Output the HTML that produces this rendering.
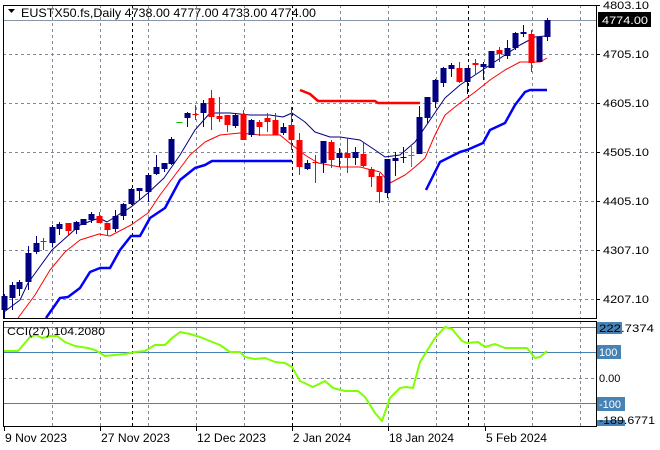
<!DOCTYPE html>
<html><head><meta charset="utf-8">
<style>
html,body{margin:0;padding:0;background:#fff;}
svg{display:block;font-family:"Liberation Sans",sans-serif;}
</style></head>
<body>
<svg id="c" width="660" height="450" xmlns="http://www.w3.org/2000/svg">
<rect width="660" height="450" fill="#fff"/>
<g id="grid"></g>
<g id="lines"></g>
<g id="candles"></g>
<g id="axes"></g>
</svg>
<script>
const NS="http://www.w3.org/2000/svg";
function el(p,tag,a,txt){const e=document.createElementNS(NS,tag);for(const k in a)e.setAttribute(k,a[k]);if(txt!==undefined)e.textContent=txt;document.getElementById(p).appendChild(e);return e;}
for(let x=52;x<596;x+=48){ if(x===292) continue;
 el('grid','line',{x1:x+.5,y1:5,x2:x+.5,y2:318,stroke:'#7f8a96','stroke-dasharray':'3,3'});
 el('grid','line',{x1:x+.5,y1:321,x2:x+.5,y2:426,stroke:'#7f8a96','stroke-dasharray':'3,3'});}
[132,292,468].forEach(x=>{
 el('grid','line',{x1:x+.5,y1:5,x2:x+.5,y2:318,stroke:'#000','stroke-dasharray':'3,3'});
 el('grid','line',{x1:x+.5,y1:321,x2:x+.5,y2:426,stroke:'#000','stroke-dasharray':'3,3'});});
[54,103,152,201,250,299].forEach(y=>el('grid','line',{x1:3,y1:y+.5,x2:596,y2:y+.5,stroke:'#7f8a96','stroke-dasharray':'3,3'}));
el('grid','line',{x1:3,y1:20.5,x2:596,y2:20.5,stroke:'#8896a4'});
[327,352,403].forEach(y=>el('grid','line',{x1:3,y1:y+.5,x2:596,y2:y+.5,stroke:'#4682b4'}));
el('grid','line',{x1:3,y1:378.5,x2:596,y2:378.5,stroke:'#7f8a96','stroke-dasharray':'3,3'});
function pl(pts,col,w){el('lines','polyline',{points:pts.map(p=>p.join(',')).join(' '),fill:'none',stroke:col,'stroke-width':w,'stroke-linejoin':'round'});}
pl([[4,312],[20,300],[28,283],[52,250],[80,225],[99,218],[107,222],[131,207],[148,193],[164,178],[180,155],[195,130],[210,113],[230,113],[250,115],[270,115],[283,117],[292,113],[305,122],[315,132],[330,137],[340,137],[360,140],[375,150],[385,157],[400,155],[415,142],[430,120],[445,98],[460,85],[475,75],[490,65],[505,55],[520,45],[535,37],[545,36]],'#000080',1);
pl([[18,318],[35,295],[50,270],[65,252],[80,240],[99,234],[110,236],[131,225],[148,213],[160,195],[175,175],[190,155],[205,142],[220,135],[240,133],[260,135],[280,135],[292,145],[305,155],[318,163],[340,167],[360,167],[380,172],[390,183],[405,175],[415,167],[425,158],[435,135],[445,115],[460,103],[475,92],[490,80],[505,70],[520,62],[530,62],[540,62],[547,58]],'#ff0000',1);
pl([[46,318],[60,298],[68,297],[80,288],[90,272],[100,268],[110,268],[120,250],[131,236],[140,236],[150,218],[165,208],[180,180],[195,168],[205,165],[212,161],[292,161]],'#0000ff',2.5);
pl([[426,190],[440,162],[460,152],[467,150],[483,143],[490,130],[505,123],[515,105],[525,92],[530,90],[547,90]],'#0000ff',2.5);
pl([[300,90],[310,94],[318,101],[375,101],[378,103],[420,103]],'#ff0000',2.5);
pl([[4,351],[18,351],[30,337],[36,335],[42,338],[50,336],[57,336],[65,342],[75,346],[88,348],[95,350],[105,356],[115,355],[125,354],[135,352],[145,351],[155,345],[165,345],[172,338],[180,332],[190,334],[200,337],[210,341],[220,345],[230,352],[240,352],[245,357],[255,359],[265,358],[275,362],[285,363],[292,367],[300,381],[313,387],[325,381],[333,388],[345,391],[358,391],[365,397],[375,413],[382,421],[390,398],[400,388],[406,387],[413,388],[420,362],[435,338],[445,327],[452,329],[462,341],[467,343],[478,342],[485,347],[495,344],[505,348],[527,348],[535,358],[540,357],[547,351]],'#7fff00',2);
const B='#000080',R='#ff0000',G='#00c000';
const C=[
[4,296,310,294,318,B],[12,285,298,282,310,B],[19,282,289,280,296,B],[28,253,282,246,290,B],[36,243,252,236,254,B],[43,241,241,238,250,R],
[52,227,243,225,247,B],[59,224,229,222,235,B],[68,223,231,223,235,R],[76,222,230,221,234,B],[83,219,225,219,225,B],[91,214,220,212,223,B],
[99,216,223,212,223,R],[107,223,230,223,236,R],[115,216,229,210,232,B],[123,204,216,203,220,B],[131,189,204,188,205,B],[139,188,191,188,200,B],
[148,175,192,173,202,B],[156,167,174,155,175,B],[164,163,169,163,172,B],[171,139,164,137,165,B],[179,122,122,122,122,G],[187,113,118,112,127,B],
[195,114,114,105,120,R],[203,103,113,100,127,B],[211,98,117,90,130,R],[219,116,119,97,122,R],[227,115,125,115,132,R],[235,115,126,114,128,B],
[243,114,140,110,140,R],[251,120,135,119,137,B],[259,122,127,120,136,R],[267,118,122,113,132,R],[275,120,135,113,135,R],[283,127,133,123,135,B],
[291,125,140,107,150,R],[299,140,167,133,175,R],[307,163,169,160,170,B],[315,162,162,155,183,R],[323,141,163,141,173,B],[331,142,160,140,168,R],
[339,153,158,148,167,B],[347,153,158,138,173,R],[355,152,158,147,165,B],[363,154,166,143,167,R],[371,169,177,167,187,R],[379,176,192,173,203,R],
[387,159,193,159,198,B],[395,158,161,152,176,B],[403,157,157,147,163,B],[411,155,155,145,167,G],[419,117,154,106,154,B],[427,97,118,97,123,B],
[435,80,102,79,108,B],[443,68,83,67,87,B],[451,65,69,63,77,B],[459,68,82,62,83,R],[467,68,82,68,94,B],[475,63,65,59,75,R],
[483,64,67,62,80,B],[491,51,68,51,68,B],[499,50,54,47,62,R],[507,48,56,40,59,B],[515,33,48,32,50,B],[523,32,34,25,37,B],
[531,34,63,30,72,R],[539,37,62,37,62,B],[547,20,37,18,41,B]];
C.forEach(c=>{const[x,t,b,wt,wb,col]=c;
 el('candles','line',{x1:x+.5,y1:wt,x2:x+.5,y2:wb,stroke:col});
 if(b-t<1) el('candles','line',{x1:x-2.5,y1:t+.5,x2:x+3.5,y2:t+.5,stroke:col});
 else el('candles','rect',{x:x-2.5,y:t,width:6,height:b-t,fill:col});});
el('axes','rect',{x:3.5,y:5.5,width:593,height:313,fill:'none',stroke:'#000'});
el('axes','rect',{x:3.5,y:321.5,width:593,height:105,fill:'none',stroke:'#000'});
el('axes','path',{d:'M8 9 L15 9 L11.5 13 Z',fill:'#000'});
el('axes','text',{x:21,y:17,'font-size':12,fill:'#000',textLength:295,lengthAdjust:'spacingAndGlyphs'},'EUSTX50.fs,Daily  4738.00 4777.00 4733.00 4774.00');
[[5,'4803.10'],[54,'4705.10'],[103,'4605.10'],[152,'4505.10'],[201,'4405.10'],[250,'4307.10'],[299,'4207.10']].forEach(([y,t])=>{
 el('axes','line',{x1:596,y1:y+.5,x2:600,y2:y+.5,stroke:'#000'});
 el('axes','text',{x:603,y:y+4,'font-size':11,fill:'#000',textLength:46,lengthAdjust:'spacingAndGlyphs'},t);});
el('axes','rect',{x:598,y:12,width:53,height:15,fill:'#000'});
el('axes','text',{x:602,y:24,'font-size':11,fill:'#fff',textLength:46,lengthAdjust:'spacingAndGlyphs'},'4774.00');
el('axes','rect',{x:597,y:322,width:25,height:12,fill:'#4682b4'});
el('axes','text',{x:599,y:332,'font-size':11,fill:'#000',textLength:55,lengthAdjust:'spacingAndGlyphs'},'222.7374');
el('axes','rect',{x:597,y:345,width:24,height:14,fill:'#4682b4'});
el('axes','text',{x:599,y:356,'font-size':11,fill:'#fff'},'100');
el('axes','text',{x:599,y:382,'font-size':11,fill:'#000'},'0.00');
el('axes','rect',{x:597,y:397,width:28,height:14,fill:'#4682b4'});
el('axes','text',{x:599,y:408,'font-size':11,fill:'#fff'},'-100');
el('axes','rect',{x:597,y:420,width:28,height:6,fill:'#4682b4'});
el('axes','text',{x:599,y:424,'font-size':11,fill:'#000',textLength:56,lengthAdjust:'spacingAndGlyphs'},'-189.6771');
el('axes','text',{x:7,y:335,'font-size':11,fill:'#000',textLength:98,lengthAdjust:'spacingAndGlyphs'},'CCI(27) 104.2080');
[[4,'9 Nov 2023',62],[100,'27 Nov 2023',69],[196,'12 Dec 2023',69],[292,'2 Jan 2024',58],[388,'18 Jan 2024',65],[485,'5 Feb 2024',61]].forEach(([x,t,w])=>{
 el('axes','line',{x1:x+.5,y1:426,x2:x+.5,y2:431,stroke:'#000'});
 el('axes','text',{x:x+1,y:442,'font-size':11.5,fill:'#000',textLength:w,lengthAdjust:'spacingAndGlyphs'},t);});
</script>
</body></html>
